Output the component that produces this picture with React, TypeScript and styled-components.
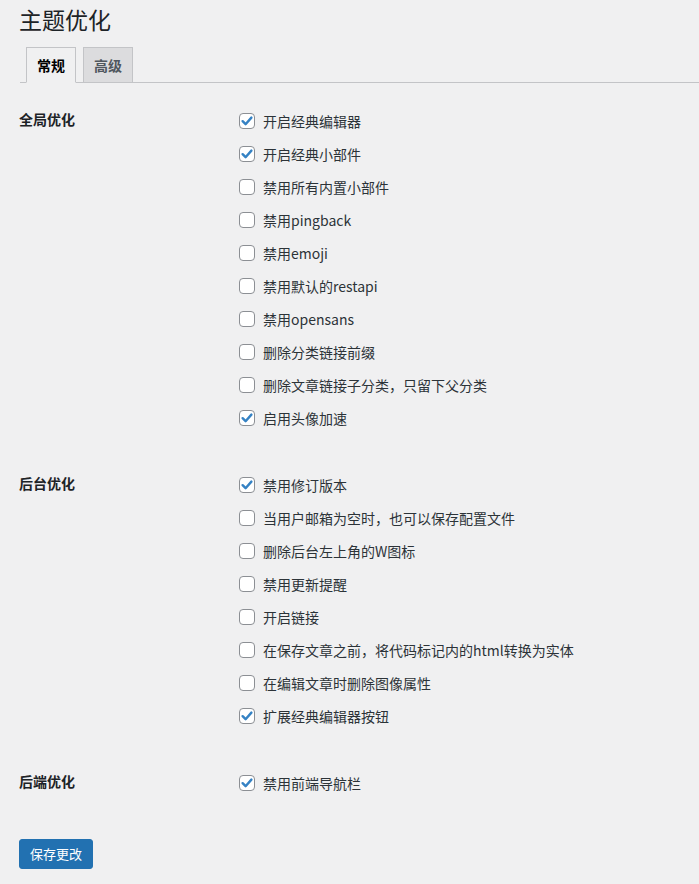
import * as React from 'react';
import styled, { createGlobalStyle } from 'styled-components';

const Colors = {
  background: '#f0f0f1',
  text: '#1d2327',
  label: '#2c3338',
  muted: '#50575e',
  tabInactive: '#dcdcde',
  border: '#c3c4c7',
  checkBorder: '#8c8f94',
  checkMark: '#3582c4',
  primary: '#2271b1',
};

const GlobalStyle = createGlobalStyle`
  html, body {
    margin: 0;
    padding: 0;
    background: ${Colors.background};
    color: ${Colors.text};
    font-family: "Noto Sans CJK SC", "Noto Sans", "Liberation Sans", sans-serif;
    font-size: 14px;
  }
`;

type Option = { label: string; checked: boolean };
type Section = { title: string; options: Option[] };

const sections: Section[] = [
  {
    title: '全局优化',
    options: [
      { label: '开启经典编辑器', checked: true },
      { label: '开启经典小部件', checked: true },
      { label: '禁用所有内置小部件', checked: false },
      { label: '禁用pingback', checked: false },
      { label: '禁用emoji', checked: false },
      { label: '禁用默认的restapi', checked: false },
      { label: '禁用opensans', checked: false },
      { label: '删除分类链接前缀', checked: false },
      { label: '删除文章链接子分类，只留下父分类', checked: false },
      { label: '启用头像加速', checked: true },
    ],
  },
  {
    title: '后台优化',
    options: [
      { label: '禁用修订版本', checked: true },
      { label: '当用户邮箱为空时，也可以保存配置文件', checked: false },
      { label: '删除后台左上角的W图标', checked: false },
      { label: '禁用更新提醒', checked: false },
      { label: '开启链接', checked: false },
      { label: '在保存文章之前，将代码标记内的html转换为实体', checked: false },
      { label: '在编辑文章时删除图像属性', checked: false },
      { label: '扩展经典编辑器按钮', checked: true },
    ],
  },
  {
    title: '后端优化',
    options: [{ label: '禁用前端导航栏', checked: true }],
  },
];

const Checkbox = ({ checked, onToggle }: { checked: boolean; onToggle: () => void }) => (
  <Box role='checkbox' aria-checked={checked} onClick={onToggle}>
    {checked && (
      <svg width='14' height='14' viewBox='0 0 14 14'>
        <path
          d='M2.6 7.2 L5.6 10.2 L11.4 3.6'
          fill='none'
          stroke={Colors.checkMark}
          strokeWidth='2.4'
          strokeLinecap='round'
          strokeLinejoin='round'
        />
      </svg>
    )}
  </Box>
);

export default function App() {
  const [state, setState] = React.useState(sections);
  const [tab, setTab] = React.useState(0);

  const toggle = (s: number, o: number) => {
    setState((prev) =>
      prev.map((sec, i) =>
        i !== s
          ? sec
          : {
              ...sec,
              options: sec.options.map((opt, j) =>
                j === o ? { ...opt, checked: !opt.checked } : opt,
              ),
            },
      ),
    );
  };

  return (
    <>
      <GlobalStyle />
      <Page>
        <Title>主题优化</Title>
        <TabBar>
          {['常规', '高级'].map((t, i) => (
            <Tab key={t} $active={tab === i} onClick={() => setTab(i)}>
              {t}
            </Tab>
          ))}
        </TabBar>
        <Form>
          {state.map((sec, s) => (
            <SectionRow key={sec.title}>
              <SectionTitle>{sec.title}</SectionTitle>
              <OptionList>
                {sec.options.map((opt, o) => (
                  <OptionLabel key={opt.label}>
                    <Checkbox checked={opt.checked} onToggle={() => toggle(s, o)} />
                    <span>{opt.label}</span>
                  </OptionLabel>
                ))}
              </OptionList>
            </SectionRow>
          ))}
          <Submit>保存更改</Submit>
        </Form>
      </Page>
    </>
  );
}

const Page = styled.div`
  padding: 0 0 20px 19px;
`;

const Title = styled.h1`
  margin: 0;
  padding: 5px 0 4px;
  font-size: 23px;
  font-weight: 400;
  line-height: 1.3;
  color: ${Colors.text};
`;

const TabBar = styled.div`
  display: flex;
  align-items: flex-end;
  margin: 8px 0 0 1px;
  height: 35px;
  border-bottom: 1px solid ${Colors.border};
`;

const Tab = styled.div<{ $active: boolean }>`
  box-sizing: border-box;
  height: 36px;
  margin-left: 6px;
  margin-bottom: -1px;
  padding: 5px 10px;
  font-size: 14px;
  line-height: 24px;
  font-weight: 600;
  cursor: pointer;
  border: 1px solid ${Colors.border};
  border-bottom-color: ${(p) => (p.$active ? Colors.background : Colors.border)};
  background: ${(p) => (p.$active ? Colors.background : Colors.tabInactive)};
  color: ${(p) => (p.$active ? '#000' : Colors.muted)};

  & + & {
    margin-left: 7px;
  }
`;

const Form = styled.div`
  padding: 5px 19px 0 0;
`;

const SectionRow = styled.div`
  display: grid;
  grid-template-columns: 220px 1fr;
  padding: 17px 0;
`;

const SectionTitle = styled.div`
  font-weight: 700;
  font-size: 14px;
  line-height: 29px;
  color: ${Colors.text};
`;

const OptionList = styled.div`
  display: flex;
  flex-direction: column;
`;

const OptionLabel = styled.label`
  display: flex;
  align-items: center;
  gap: 8px;
  height: 33px;
  font-size: 14px;
  color: ${Colors.label};
  cursor: pointer;
`;

const Box = styled.span`
  box-sizing: border-box;
  display: inline-flex;
  align-items: center;
  justify-content: center;
  width: 16px;
  height: 16px;
  border: 1px solid ${Colors.checkBorder};
  border-radius: 4px;
  background: #fff;
  flex-shrink: 0;
`;

const Submit = styled.button`
  margin-top: 22px;
  height: 30px;
  padding: 0 10px;
  font-family: inherit;
  font-size: 13px;
  color: #fff;
  background: ${Colors.primary};
  border: 1px solid ${Colors.primary};
  border-radius: 3px;
  cursor: pointer;
`;
